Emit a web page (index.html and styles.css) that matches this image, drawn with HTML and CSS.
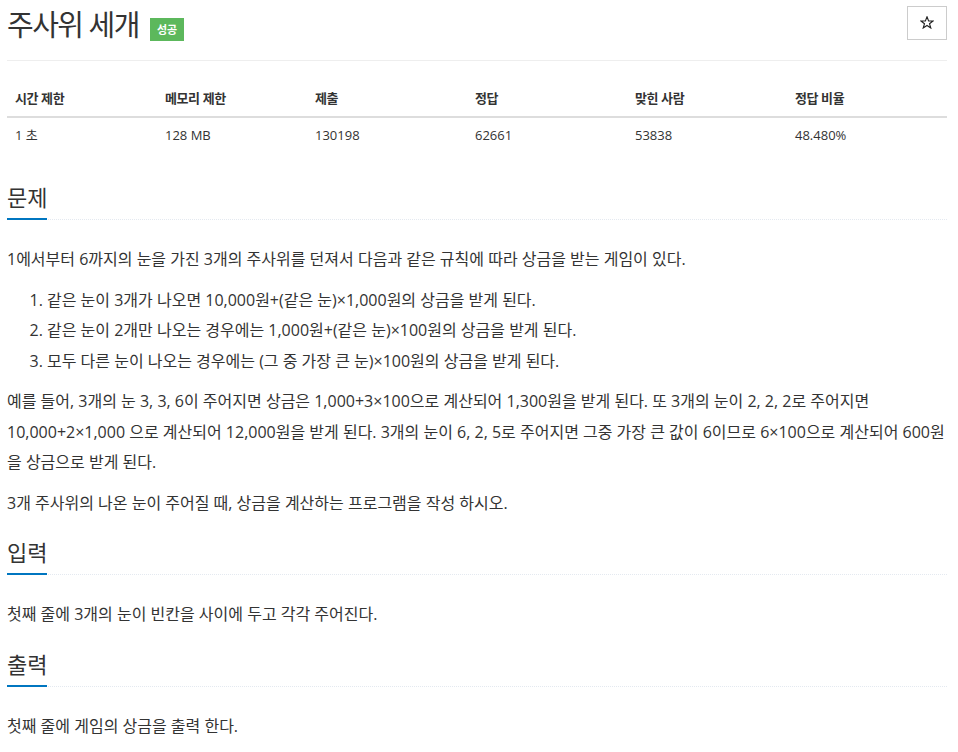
FILE: index.html
```html
<!DOCTYPE html>
<html lang="ko">
<head>
<meta charset="utf-8">
<title>주사위 세개</title>
<link rel="stylesheet" href="styles.css">
</head>
<body>
<div class="page">
  <div class="page-header">
    <h1 class="title"><span class="title-text">주사위 세개</span><span class="badge">성공</span></h1>
    <button class="star" type="button" aria-label="즐겨찾기">
      <svg width="14" height="13" viewBox="0 0 14 13" aria-hidden="true">
        <polygon points="7,0.8 8.6,4.9 13,5 9.5,7.7 10.8,12 7,9.5 3.2,12 4.5,7.7 1,5 5.4,4.9" fill="none" stroke="#222" stroke-width="1.1" stroke-linejoin="miter"/>
      </svg>
    </button>
  </div>

  <table class="info">
    <thead>
      <tr>
        <th class="c1">시간 제한</th>
        <th class="c1">메모리 제한</th>
        <th class="c2">제출</th>
        <th class="c2">정답</th>
        <th class="c2">맞힌 사람</th>
        <th class="c2">정답 비율</th>
      </tr>
    </thead>
    <tbody>
      <tr>
        <td>1 초</td>
        <td>128 MB</td>
        <td>130198</td>
        <td>62661</td>
        <td>53838</td>
        <td>48.480%</td>
      </tr>
    </tbody>
  </table>

  <section class="section">
    <div class="headline"><h2>문제</h2></div>
    <div class="problem-text">
      <p>1에서부터 6까지의 눈을 가진 3개의 주사위를 던져서 다음과 같은 규칙에 따라 상금을 받는 게임이 있다.</p>
      <ol>
        <li>같은 눈이 3개가 나오면 10,000원+(같은 눈)×1,000원의 상금을 받게 된다.</li>
        <li>같은 눈이 2개만 나오는 경우에는 1,000원+(같은 눈)×100원의 상금을 받게 된다.</li>
        <li>모두 다른 눈이 나오는 경우에는 (그 중 가장 큰 눈)×100원의 상금을 받게 된다.</li>
      </ol>
      <p>예를 들어, 3개의 눈 3, 3, 6이 주어지면 상금은 1,000+3×100으로 계산되어 1,300원을 받게 된다. 또 3개의 눈이 2, 2, 2로 주어지면 10,000+2×1,000 으로 계산되어 12,000원을 받게 된다. 3개의 눈이 6, 2, 5로 주어지면 그중 가장 큰 값이 6이므로 6×100으로 계산되어 600원을 상금으로 받게 된다.</p>
      <p>3개 주사위의 나온 눈이 주어질 때, 상금을 계산하는 프로그램을 작성 하시오.</p>
    </div>
  </section>

  <section class="section">
    <div class="headline"><h2>입력</h2></div>
    <div class="problem-text">
      <p>첫째 줄에 3개의 눈이 빈칸을 사이에 두고 각각 주어진다.</p>
    </div>
  </section>

  <section class="section">
    <div class="headline"><h2>출력</h2></div>
    <div class="problem-text">
      <p>첫째 줄에 게임의 상금을 출력 한다.</p>
    </div>
  </section>
</div>
</body>
</html>
```

FILE: styles.css
```css
html, body {
  margin: 0;
  padding: 0;
  background: #fff;
}

body {
  font-family: "Open Sans", "Noto Sans CJK KR", sans-serif;
  font-size: 13px;
  color: #333;
}

.page {
  width: 940px;
  margin-left: 7px;
}

.page-header {
  display: flex;
  justify-content: space-between;
  align-items: flex-start;
  padding-top: 6px;
  padding-bottom: 9px;
  border-bottom: 1px solid #eee;
  margin-bottom: 20px;
}

.title {
  display: flex;
  align-items: flex-end;
  margin: 2px 0 10px;
  font-size: 29px;
  line-height: 33px;
  font-weight: normal;
  color: #333;
}

.title-text {
  letter-spacing: -1.5px;
}

.badge {
  display: inline-block;
  width: 34px;
  height: 23px;
  line-height: 23px;
  margin-left: 11px;
  background: #5cb85c;
  color: #fff;
  font-size: 11px;
  font-weight: bold;
  text-align: center;
  letter-spacing: -0.3px;
}

.star {
  display: flex;
  align-items: center;
  justify-content: center;
  width: 40px;
  height: 34px;
  padding: 0 0 1px;
  background: #fff;
  border: 1px solid #ccc;
  border-radius: 0;
}

.info {
  width: 100%;
  border-collapse: collapse;
  margin-bottom: 32px;
}

.info th,
.info td {
  padding: 8px;
  line-height: 1.42857;
  text-align: left;
}

.info th {
  font-weight: bold;
  letter-spacing: -0.4px;
  border-bottom: 2px solid #ddd;
}

.info .c1 {
  width: 134px;
}

.info .c2 {
  width: 144px;
}

.section {
  margin: 0;
}

.headline {
  margin: 21px 0 24px;
  border-bottom: 1px dotted #e4e9f0;
}

.headline h2 {
  display: inline-block;
  margin: 0 0 -1px;
  padding-bottom: 8px;
  font-size: 22px;
  line-height: 26px;
  font-weight: normal;
  border-bottom: 2px solid #0076c0;
}

.problem-text {
  font-size: 16px;
  line-height: 30.5px;
}

.problem-text p {
  margin: 0 0 10px;
}

.problem-text ol {
  margin: 0 0 10px;
  padding-left: 40px;
}
```
